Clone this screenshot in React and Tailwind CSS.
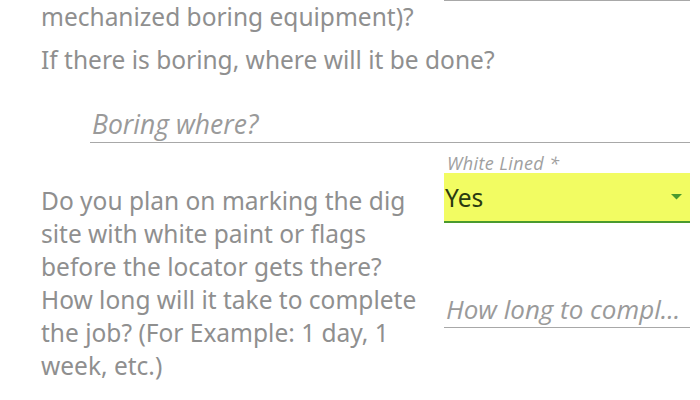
export default function App() {
  return (
    <div className="w-[700px] h-[400px] overflow-hidden bg-white text-[#8f8f8f] font-['Noto_Sans',sans-serif]">
      <div className="flex pl-[41px] pr-[10px]">
        <div className="w-[383px] text-[24.5px] leading-[33px]">mechanized boring equipment)?</div>
        <div className="ml-[20px] flex-1 h-px bg-[#a8a8a8]" />
      </div>
      <div className="pl-[41px] mt-[10px] text-[24.5px] leading-[33px]">If there is boring, where will it be done?</div>
      <div className="ml-[90px] mr-[10px] mt-[30px] h-[37px] border-b border-[#a8a8a8] pl-[2px]">
        <div className="font-['Open_Sans',sans-serif] text-[26.5px] leading-[36px] italic text-[#9a9a9a]">Boring where?</div>
      </div>
      <div className="flex pl-[41px] pr-[10px] mt-[8px]">
        <div className="w-[383px] pt-[33px] text-[24.5px] leading-[33px]">
          Do you plan on marking the dig site with white paint or flags before the locator gets there?
        </div>
        <div className="ml-[20px] flex-1">
          <div className="pl-[3px] pt-[2px] h-[22px] font-['Open_Sans',sans-serif] text-[18px] leading-[20px] tracking-[0.4px] italic text-[#a0a0a0]">White Lined *</div>
          <div className="h-[50px] bg-[#f2fc62] border-b-2 border-[#4a9a2e] flex items-center justify-between pl-[1px] pr-[8px]">
            <span className="text-[24.5px] leading-[33px] text-[#2a3a10]">Yes</span>
            <svg width="11" height="6" viewBox="0 0 11 6"><path d="M0 0 L11 0 L5.5 5.5 Z" fill="#4a9a2e" /></svg>
          </div>
        </div>
      </div>
      <div className="flex pl-[41px] pr-[10px]">
        <div className="w-[383px] text-[24.5px] leading-[33px]">
          How long will it take to complete the job? (For Example: 1 day, 1 week, etc.)
        </div>
        <div className="ml-[20px] flex-1">
          <div className="mt-[9px] h-[36px] border-b border-[#a8a8a8] pl-[2px] font-['Open_Sans',sans-serif] text-[26px] leading-[35px] italic text-[#9a9a9a] whitespace-nowrap overflow-hidden">
            How long to compl...
          </div>
        </div>
      </div>
    </div>
  );
}
